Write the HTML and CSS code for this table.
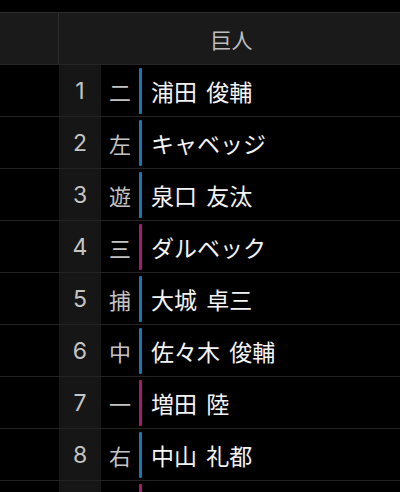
FILE: index.html
```html
<!DOCTYPE html>
<html lang="ja">
<head>
<meta charset="utf-8">
<link rel="stylesheet" href="styles.css">
</head>
<body>
<div class="lineup">
  <div class="head">
    <div class="head-left"></div>
    <div class="head-team">巨人</div>
  </div>
  <div class="row"><div class="left"></div><div class="num">1</div><div class="pos">二</div><div class="bar blue"></div><div class="name">浦田 俊輔</div></div>
  <div class="row"><div class="left"></div><div class="num">2</div><div class="pos">左</div><div class="bar blue"></div><div class="name">キャベッジ</div></div>
  <div class="row"><div class="left"></div><div class="num">3</div><div class="pos">遊</div><div class="bar blue"></div><div class="name">泉口 友汰</div></div>
  <div class="row"><div class="left"></div><div class="num">4</div><div class="pos">三</div><div class="bar pink"></div><div class="name">ダルベック</div></div>
  <div class="row"><div class="left"></div><div class="num">5</div><div class="pos">捕</div><div class="bar blue"></div><div class="name">大城 卓三</div></div>
  <div class="row"><div class="left"></div><div class="num">6</div><div class="pos">中</div><div class="bar blue"></div><div class="name">佐々木 俊輔</div></div>
  <div class="row"><div class="left"></div><div class="num">7</div><div class="pos">一</div><div class="bar pink"></div><div class="name">増田 陸</div></div>
  <div class="row"><div class="left"></div><div class="num">8</div><div class="pos">右</div><div class="bar blue"></div><div class="name">中山 礼都</div></div>
  <div class="row"><div class="left"></div><div class="num"></div><div class="pos"></div><div class="bar pink"></div><div class="name"></div></div>
</div>
</body>
</html>
```
FILE: styles.css
```css
html, body {
  margin: 0;
  padding: 0;
  background: #000;
  overflow: hidden;
}
body {
  width: 400px;
  height: 492px;
  font-family: "Noto Sans CJK JP", "Noto Sans", sans-serif;
  color: #fff;
}
.lineup {
  padding-top: 12px;
  height: 480px;
  overflow: hidden;
}
.head {
  display: flex;
  height: 51px;
  background: #1a1a1a;
  border-top: 1px solid #2e2e2e;
  border-bottom: 1px solid #262626;
}
.head-left {
  width: 58px;
  border-right: 1px solid #2c2c2c;
}
.head-team {
  flex: 1;
  display: flex;
  align-items: center;
  justify-content: center;
  font-size: 21px;
  color: #bdbdbd;
  padding-left: 4px;
}
.row {
  display: flex;
  height: 51px;
  border-bottom: 1px solid #222;
  flex-shrink: 0;
}
.left {
  width: 59px;
}
.num {
  width: 42px;
  background: #161616;
  display: flex;
  align-items: center;
  justify-content: center;
  font-family: Inter, "Noto Sans", sans-serif;
  font-size: 23px;
  color: #c4c4c4;
}
.pos {
  width: 38px;
  display: flex;
  align-items: center;
  justify-content: center;
  font-size: 22px;
  color: #c4c4c4;
}
.bar {
  width: 3px;
  margin: 3px 0 2px;
  border-radius: 1px;
}
.blue { background: #1b76b3; }
.pink { background: #a8196f; }
.name {
  flex: 1;
  display: flex;
  align-items: center;
  padding-left: 9px;
  font-size: 23px;
  color: #f4f4f4;
  white-space: pre;
  word-spacing: 4px;
}
```
